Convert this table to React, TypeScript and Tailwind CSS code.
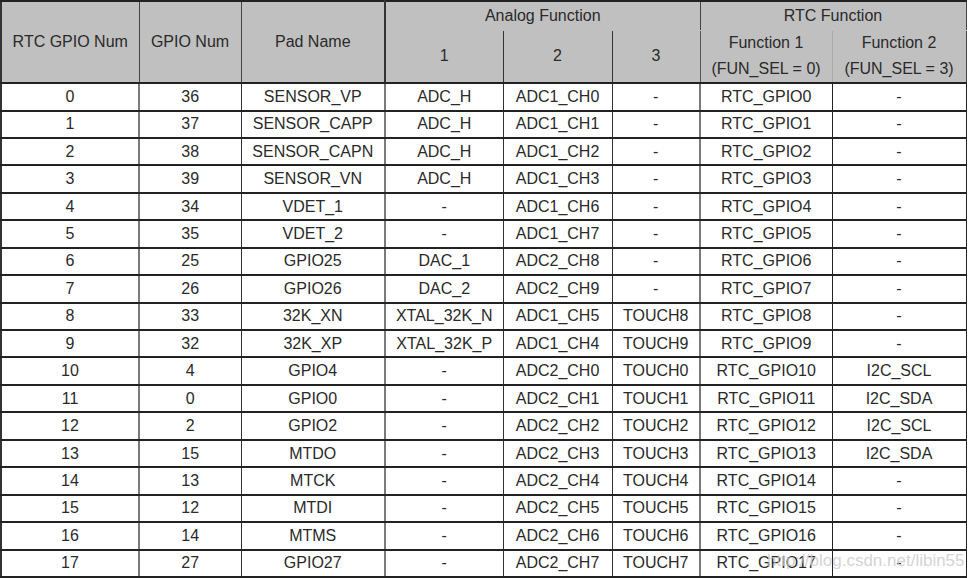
import React from "react";

const rows: string[][] = [
  ["0", "36", "SENSOR_VP", "ADC_H", "ADC1_CH0", "-", "RTC_GPIO0", "-"],
  ["1", "37", "SENSOR_CAPP", "ADC_H", "ADC1_CH1", "-", "RTC_GPIO1", "-"],
  ["2", "38", "SENSOR_CAPN", "ADC_H", "ADC1_CH2", "-", "RTC_GPIO2", "-"],
  ["3", "39", "SENSOR_VN", "ADC_H", "ADC1_CH3", "-", "RTC_GPIO3", "-"],
  ["4", "34", "VDET_1", "-", "ADC1_CH6", "-", "RTC_GPIO4", "-"],
  ["5", "35", "VDET_2", "-", "ADC1_CH7", "-", "RTC_GPIO5", "-"],
  ["6", "25", "GPIO25", "DAC_1", "ADC2_CH8", "-", "RTC_GPIO6", "-"],
  ["7", "26", "GPIO26", "DAC_2", "ADC2_CH9", "-", "RTC_GPIO7", "-"],
  ["8", "33", "32K_XN", "XTAL_32K_N", "ADC1_CH5", "TOUCH8", "RTC_GPIO8", "-"],
  ["9", "32", "32K_XP", "XTAL_32K_P", "ADC1_CH4", "TOUCH9", "RTC_GPIO9", "-"],
  ["10", "4", "GPIO4", "-", "ADC2_CH0", "TOUCH0", "RTC_GPIO10", "I2C_SCL"],
  ["11", "0", "GPIO0", "-", "ADC2_CH1", "TOUCH1", "RTC_GPIO11", "I2C_SDA"],
  ["12", "2", "GPIO2", "-", "ADC2_CH2", "TOUCH2", "RTC_GPIO12", "I2C_SCL"],
  ["13", "15", "MTDO", "-", "ADC2_CH3", "TOUCH3", "RTC_GPIO13", "I2C_SDA"],
  ["14", "13", "MTCK", "-", "ADC2_CH4", "TOUCH4", "RTC_GPIO14", "-"],
  ["15", "12", "MTDI", "-", "ADC2_CH5", "TOUCH5", "RTC_GPIO15", "-"],
  ["16", "14", "MTMS", "-", "ADC2_CH6", "TOUCH6", "RTC_GPIO16", "-"],
  ["17", "27", "GPIO27", "-", "ADC2_CH7", "TOUCH7", "RTC_GPIO17", "-"],
];

const widths = [138, 102, 144, 118, 109, 88, 132, 134];

const bodyRight = [
  "border-r-2 border-r-[#7a7a7a]",
  "border-r border-r-[#333]",
  "border-r-2 border-r-[#7a7a7a]",
  "border-r border-r-[#333]",
  "border-r border-r-[#333]",
  "border-r-2 border-r-[#7a7a7a]",
  "border-r border-r-[#222]",
  "border-r border-r-[#222]",
];

export default function App() {
  return (
    <div
      className="relative w-[970px] h-[578px] bg-white text-[#2a2a2a] overflow-hidden"
      style={{ fontFamily: '"Liberation Sans", Arial, sans-serif' }}
    >
      <table className="table-fixed border-collapse w-[966px] text-[16px] leading-none">
        <colgroup>
          {widths.map((w, i) => (
            <col key={i} style={{ width: w }} />
          ))}
        </colgroup>
        <thead>
          <tr className="h-[29px] bg-[#c0c0c0]">
            <th rowSpan={2} className="font-normal text-center border-t-2 border-t-[#222] border-l-2 border-l-[#333] border-b-2 border-b-[#222] border-r border-r-[#444]">
              RTC GPIO Num
            </th>
            <th rowSpan={2} className="font-normal text-center border-t-2 border-t-[#222] border-b-2 border-b-[#222] border-r border-r-[#444]">
              GPIO Num
            </th>
            <th rowSpan={2} className="font-normal text-center border-t-2 border-t-[#222] border-b-2 border-b-[#222] border-r-2 border-r-[#333]">
              Pad Name
            </th>
            <th colSpan={3} className="font-normal text-center border-t-2 border-t-[#222] border-r border-r-[#444] border-b border-b-[#c0c0c0] pt-[1px]">
              Analog Function
            </th>
            <th colSpan={2} className="font-normal text-center border-t-2 border-t-[#222] border-r border-r-[#444] border-b border-b-[#c0c0c0] pt-[1px]">
              RTC Function
            </th>
          </tr>
          <tr className="h-[53px] bg-[#c0c0c0]">
            <th className="font-normal text-center border-b-2 border-b-[#222] border-r border-r-[#333]">1</th>
            <th className="font-normal text-center border-b-2 border-b-[#222] border-r border-r-[#333]">2</th>
            <th className="font-normal text-center border-b-2 border-b-[#222] border-r border-r-[#555]">3</th>
            <th className="font-normal text-center border-b-2 border-b-[#222] border-r border-r-[#aaa]">
              <div className="flex flex-col items-center gap-[10px] pb-[1px]">
                <span>Function 1</span>
                <span>(FUN_SEL = 0)</span>
              </div>
            </th>
            <th className="font-normal text-center border-b-2 border-b-[#222] border-r border-r-[#444]">
              <div className="flex flex-col items-center gap-[10px] pb-[1px]">
                <span>Function 2</span>
                <span>(FUN_SEL = 3)</span>
              </div>
            </th>
          </tr>
        </thead>
        <tbody>
          {rows.map((r, ri) => (
            <tr key={ri} className={ri % 2 === 0 ? "h-[27.5px]" : "h-[27.4px]"}>
              {r.map((c, ci) => (
                <td
                  key={ci}
                  className={`text-center p-0 border-b-2 border-b-[#222] ${bodyRight[ci]} ${ci === 0 ? "border-l-2 border-l-[#333]" : ""}`}
                >
                  {c}
                </td>
              ))}
            </tr>
          ))}
        </tbody>
      </table>
      <div className="absolute left-[767px] top-[552px] text-[17px] leading-none text-[#c8c8c8]/80 pointer-events-none whitespace-nowrap">
        http://blog.csdn.net/libin55
      </div>
    </div>
  );
}
